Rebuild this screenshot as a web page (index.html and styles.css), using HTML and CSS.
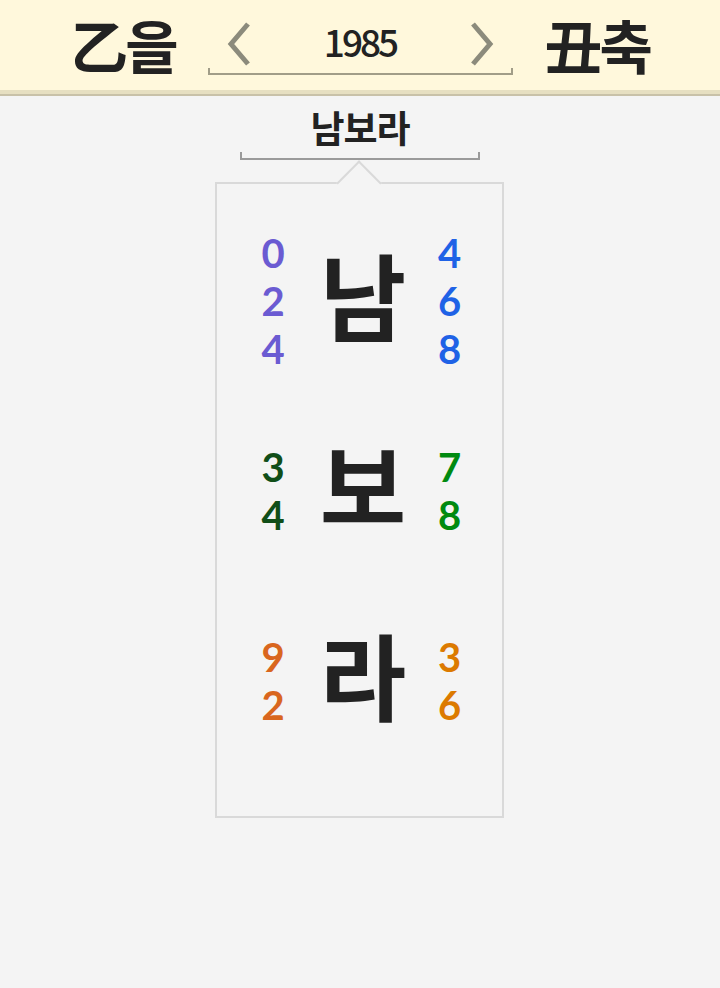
FILE: index.html
```html
<!DOCTYPE html>
<html lang="ko">
<head>
<meta charset="utf-8">
<title>남보라</title>
<link rel="stylesheet" href="styles.css">
</head>
<body>
<header class="topbar">
  <div class="ganji">乙을</div>
  <div class="year-nav">
    <div class="year-row">
      <svg class="chev" viewBox="0 0 24 44" width="24" height="44"><polyline points="21,2 4,22 21,42" fill="none" stroke="#8c8b7c" stroke-width="5"/></svg>
      <span class="year">1985</span>
      <svg class="chev" viewBox="0 0 24 44" width="24" height="44"><polyline points="3,2 20,22 3,42" fill="none" stroke="#8c8b7c" stroke-width="5"/></svg>
    </div>
    <div class="bracket bracket-nav"></div>
  </div>
  <div class="ganji">丑축</div>
</header>
<main class="content">
  <div class="name-block">
    <div class="name-title">남보라</div>
    <div class="bracket bracket-name"></div>
  </div>
  <div class="card">
    <span class="notch"></span>
    <div class="row">
      <div class="nums c-purple"><span>0</span><span>2</span><span>4</span></div>
      <div class="glyph">남</div>
      <div class="nums c-blue"><span>4</span><span>6</span><span>8</span></div>
    </div>
    <div class="row">
      <div class="nums c-dkgreen"><span>3</span><span>4</span></div>
      <div class="glyph">보</div>
      <div class="nums c-green"><span>7</span><span>8</span></div>
    </div>
    <div class="row">
      <div class="nums c-rust"><span>9</span><span>2</span></div>
      <div class="glyph">라</div>
      <div class="nums c-orange"><span>3</span><span>6</span></div>
    </div>
  </div>
</main>
</body>
</html>
```
FILE: styles.css
```css
html, body {
  margin: 0;
  padding: 0;
}
body {
  background: #f4f4f4;
  font-family: "Noto Sans CJK KR", "Noto Sans", sans-serif;
  color: #222;
}
.topbar {
  height: 90px;
  background: #fff8dc;
  border-bottom: 4px solid #e6dfc1;
  box-shadow: 0 2px 0 #c8c1a8;
  display: flex;
  align-items: center;
  justify-content: center;
  gap: 32px;
}
.ganji {
  font-size: 58px;
  font-weight: 700;
  line-height: 1;
  color: #222;
  letter-spacing: -3px;
  margin-top: -2px;
}
.year-nav {
  width: 305px;
  display: flex;
  flex-direction: column;
  margin-top: 4px;
}
.year-row {
  display: flex;
  align-items: center;
  justify-content: space-between;
  padding: 0 19px 0 19px;
  height: 48px;
}
.bracket {
  box-sizing: border-box;
  border: 2px solid #a19d88;
  border-top: none;
  height: 7px;
}
.chev {
  display: block;
}
.year {
  font-size: 37px;
  font-weight: 500;
  line-height: 1;
  letter-spacing: -3px;
  color: #222;
  margin-top: -4px;
}
.content {
  display: flex;
  flex-direction: column;
  align-items: center;
}
.name-block {
  width: 240px;
  margin-top: 8px;
  display: flex;
  flex-direction: column;
}
.name-title {
  text-align: center;
  font-size: 37px;
  font-weight: 700;
  line-height: 50px;
  color: #222;
  letter-spacing: -1px;
}
.bracket-name {
  border-color: #9a9a9a;
  border-width: 2px;
  height: 8px;
}
.card {
  position: relative;
  margin-top: 22px;
  margin-left: -1px;
  width: 289px;
  box-sizing: border-box;
  border: 2px solid #d9d9d9;
  background: #f4f4f4;
  padding: 22px 0 40px;
}
.notch {
  position: absolute;
  top: -17px;
  left: calc(50% - 17px);
  width: 32px;
  height: 32px;
  box-sizing: border-box;
  background: #f4f4f4;
  border-top: 2px solid #d9d9d9;
  border-left: 2px solid #d9d9d9;
  transform: rotate(45deg);
}
.row {
  height: 190px;
  display: grid;
  grid-template-columns: 112px 68px 105px;
  align-items: center;
}
.nums {
  display: flex;
  flex-direction: column;
  align-items: center;
  font-family: Lato, "Noto Sans", sans-serif;
  font-size: 40px;
  font-weight: 700;
  line-height: 48px;
}
.glyph {
  display: flex;
  justify-content: center;
  font-size: 94px;
  font-weight: 700;
  line-height: 1;
  color: #222;
  margin-bottom: 16px;
}
.c-purple { color: #6b5bd2; }
.c-blue { color: #1f62e6; }
.c-dkgreen { color: #104e18; }
.c-green { color: #008a10; }
.c-rust { color: #d9661e; }
.c-orange { color: #dc7a00; }
```
